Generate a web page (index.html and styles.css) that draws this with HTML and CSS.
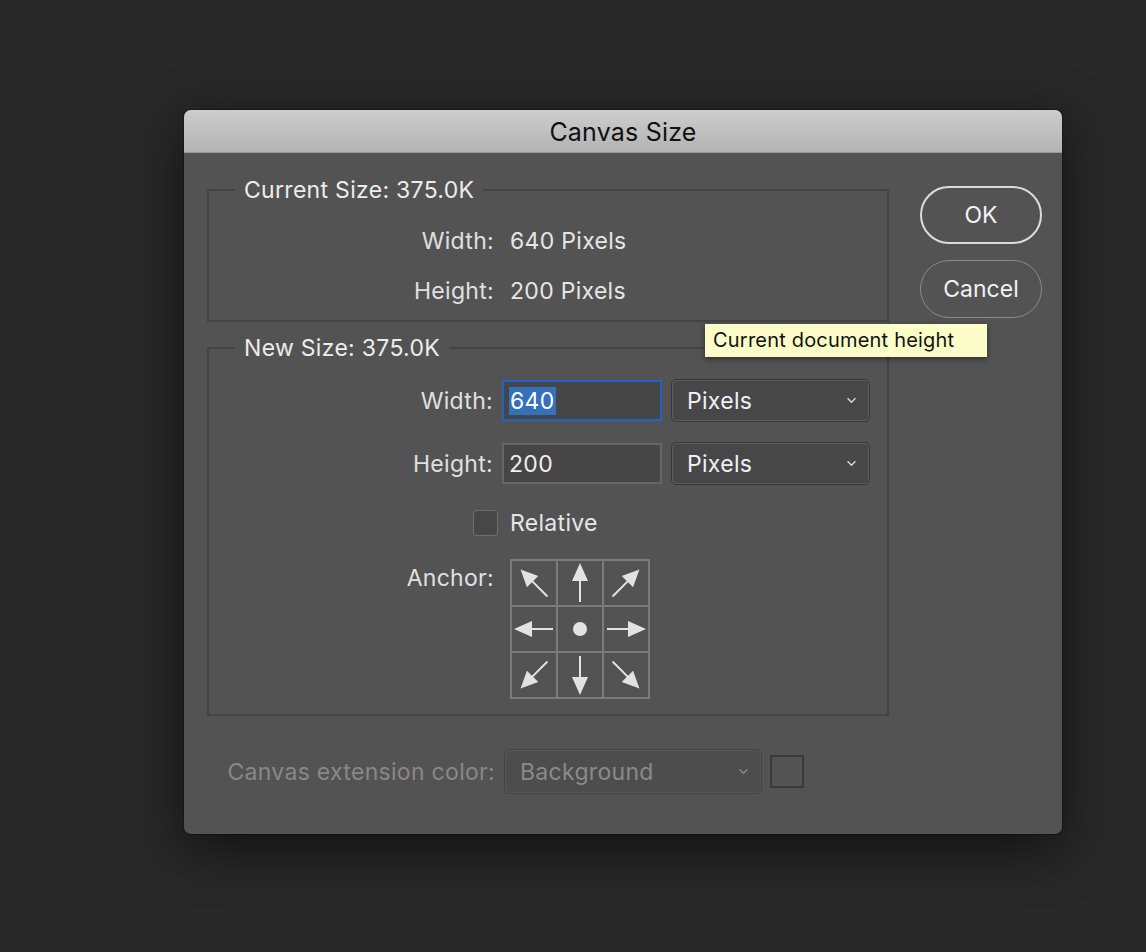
FILE: index.html
```html
<!DOCTYPE html>
<html lang="en">
<head>
  <meta charset="UTF-8">
  <title>Canvas Size</title>
  <link rel="stylesheet" href="styles.css">
</head>
<body>
  <div class="dialog">
    <div class="titlebar">Canvas Size</div>
    <div class="dialog-body">
      <div class="main">
        <fieldset class="group current">
          <legend>Current Size: 375.0K</legend>
          <div class="info-row"><span class="label">Width:</span><span class="value">640 Pixels</span></div>
          <div class="info-row"><span class="label">Height:</span><span class="value">200 Pixels</span></div>
        </fieldset>

        <fieldset class="group newsize">
          <legend>New Size: 375.0K</legend>
          <div class="field-row">
            <span class="label">Width:</span>
            <div class="input focused"><span class="sel">640</span></div>
            <div class="select">Pixels <svg class="chev" viewBox="0 0 12 8"><path d="M1.5 1.5 L6 6 L10.5 1.5"/></svg></div>
          </div>
          <div class="field-row">
            <span class="label">Height:</span>
            <div class="input">200</div>
            <div class="select">Pixels <svg class="chev" viewBox="0 0 12 8"><path d="M1.5 1.5 L6 6 L10.5 1.5"/></svg></div>
          </div>
          <div class="check-row">
            <span class="checkbox"></span>
            <span>Relative</span>
          </div>
          <div class="anchor-row">
            <span class="label">Anchor:</span>
            <div class="anchor">
              <div class="cell"><svg viewBox="0 0 44 44"><g transform="rotate(-45 22 22)"><path d="M22 3 L30 20 L23 20 L23 41 L21 41 L21 20 L14 20 Z"/></g></svg></div>
              <div class="cell"><svg viewBox="0 0 44 44"><path d="M22 2 L30 20 L23 20 L23 41 L21 41 L21 20 L14 20 Z"/></svg></div>
              <div class="cell"><svg viewBox="0 0 44 44"><g transform="rotate(45 22 22)"><path d="M22 3 L30 20 L23 20 L23 41 L21 41 L21 20 L14 20 Z"/></g></svg></div>
              <div class="cell"><svg viewBox="0 0 44 44"><g transform="rotate(-90 22 22)"><path d="M22 2 L30 20 L23 20 L23 41 L21 41 L21 20 L14 20 Z"/></g></svg></div>
              <div class="cell"><svg viewBox="0 0 44 44"><circle cx="22" cy="22" r="7"/></svg></div>
              <div class="cell"><svg viewBox="0 0 44 44"><g transform="rotate(90 22 22)"><path d="M22 2 L30 20 L23 20 L23 41 L21 41 L21 20 L14 20 Z"/></g></svg></div>
              <div class="cell"><svg viewBox="0 0 44 44"><g transform="rotate(-135 22 22)"><path d="M22 3 L30 20 L23 20 L23 41 L21 41 L21 20 L14 20 Z"/></g></svg></div>
              <div class="cell"><svg viewBox="0 0 44 44"><g transform="rotate(180 22 22)"><path d="M22 2 L30 20 L23 20 L23 41 L21 41 L21 20 L14 20 Z"/></g></svg></div>
              <div class="cell"><svg viewBox="0 0 44 44"><g transform="rotate(135 22 22)"><path d="M22 3 L30 20 L23 20 L23 41 L21 41 L21 20 L14 20 Z"/></g></svg></div>
            </div>
          </div>
        </fieldset>

        <div class="ext-row">
          <span class="label">Canvas extension color:</span>
          <div class="select disabled">Background <svg class="chev" viewBox="0 0 12 8"><path d="M1.5 1.5 L6 6 L10.5 1.5"/></svg></div>
          <span class="swatch"></span>
        </div>
      </div>

      <div class="actions">
        <button class="btn primary">OK</button>
        <button class="btn">Cancel</button>
      </div>
    </div>

    <div class="tooltip">Current document height</div>
  </div>
</body>
</html>
```

FILE: styles.css
```css
html, body {
  margin: 0;
  padding: 0;
}
body {
  background: #282828;
  min-height: 952px;
  font-family: Inter, "Noto Sans", sans-serif;
  color: #e6e6e6;
  overflow: hidden;
}

.dialog {
  position: relative;
  width: 878px;
  height: 724px;
  margin: 110px 0 0 184px;
  background: #535353;
  border-radius: 7px;
  box-shadow: 0 14px 50px rgba(0, 0, 0, 0.55), 0 0 0 1px rgba(0, 0, 0, 0.25);
}

.titlebar {
  height: 42px;
  line-height: 44px;
  text-align: center;
  font-size: 25px;
  letter-spacing: 0.2px;
  color: #111;
  background: linear-gradient(to bottom, #cdcdcd, #b3b3b3);
  border-bottom: 1px solid #9a9a9a;
  border-radius: 7px 7px 0 0;
}

.dialog-body {
  display: flex;
  padding: 0 20px 0 23px;
}
.main {
  width: 682px;
  padding-top: 24px;
  font-size: 23px;
  letter-spacing: 0.3px;
}

.group {
  margin: 0;
  padding: 0;
  border: 2px solid #444;
  min-width: 0;
}
.group legend {
  margin-left: 26px;
  padding: 0 9px;
  font-size: 23px;
  line-height: 26px;
  color: #ececec;
}
.group.current {
  padding: 13px 0 4px;
}
.group.newsize {
  margin-top: 13px;
  padding: 18px 0 15px;
}

.label {
  text-align: right;
  color: #e0e0e0;
}

.info-row {
  display: grid;
  grid-template-columns: 285px auto;
  height: 50px;
  align-items: center;
}
.info-row .value {
  padding-left: 16px;
}

.field-row {
  display: grid;
  grid-template-columns: 285px 159px 199px;
  column-gap: 9px;
  height: 42px;
  align-items: center;
  margin-bottom: 21px;
}
.field-row .label {
  margin-right: 1px;
}

.input {
  box-sizing: border-box;
  height: 41px;
  margin-left: -1px;
  padding-left: 5px;
  display: flex;
  align-items: center;
  background: #464646;
  border: 2px solid #666;
  color: #f0f0f0;
}
.input.focused {
  border-color: #1d63c9;
}
.input .sel {
  background: #3570bb;
  color: #fff;
  padding: 0 1px;
}

.select {
  box-sizing: border-box;
  height: 43px;
  padding: 0 12px 0 15px;
  display: flex;
  align-items: center;
  justify-content: space-between;
  background: #474747;
  border: 1px solid #383838;
  box-shadow: inset 0 0 0 1px #5d5d5d;
  border-radius: 5px;
  color: #f0f0f0;
}
.chev {
  width: 11px;
  height: 7px;
  fill: none;
  stroke: #d8d8d8;
  stroke-width: 1.6;
}

.check-row {
  display: flex;
  align-items: center;
  height: 26px;
  padding-left: 264px;
  margin-top: 26px;
}
.checkbox {
  box-sizing: border-box;
  width: 25px;
  height: 26px;
  margin-right: 12px;
  border: 1.5px solid #6f6f6f;
  border-radius: 4px;
  background: #474747;
}

.anchor-row {
  display: grid;
  grid-template-columns: 285px auto;
  column-gap: 16px;
  margin-top: 23px;
}
.anchor-row .label {
  padding-top: 5px;
}
.anchor {
  display: grid;
  grid-template-columns: repeat(3, 44px);
  grid-template-rows: repeat(3, 44px);
  gap: 2px;
  width: max-content;
  padding: 2px;
  background: #7b7b7b;
}
.cell {
  background: #535353;
}
.cell svg {
  display: block;
  width: 44px;
  height: 44px;
  fill: #e2e2e2;
}

.ext-row {
  display: grid;
  grid-template-columns: 287px 258px 34px;
  column-gap: 10px;
  align-items: center;
  margin-top: 33px;
}
.ext-row .label {
  color: #888;
  margin-right: -1px;
}
.select.disabled {
  height: 45px;
  color: #8a8a8a;
  background: #4d4d4d;
  border-color: #444;
  box-shadow: inset 0 0 0 1px #555;
}
.select.disabled .chev {
  stroke: #888;
}
.swatch {
  box-sizing: border-box;
  width: 34px;
  height: 33px;
  border: 2px solid #3a3a3a;
  margin-left: -2px;
}

.actions {
  display: flex;
  flex-direction: column;
  gap: 16px;
  margin-left: 31px;
  padding-top: 33px;
}
.btn {
  width: 122px;
  height: 58px;
  border-radius: 29px;
  background: #535353;
  border: 1.5px solid #8a8a8a;
  color: #f2f2f2;
  font-family: Inter, "Noto Sans", sans-serif;
  font-size: 23px;
  padding: 0;
}
.btn.primary {
  border: 2px solid #dcdcdc;
}

.tooltip {
  position: absolute;
  left: 521px;
  top: 214px;
  box-sizing: border-box;
  width: 282px;
  height: 33px;
  padding: 0 8px;
  line-height: 33px;
  background: #fdfdc9;
  color: #111;
  font-size: 20px;
  letter-spacing: 0.2px;
  box-shadow: 0 2px 6px rgba(0, 0, 0, 0.45);
}
```
